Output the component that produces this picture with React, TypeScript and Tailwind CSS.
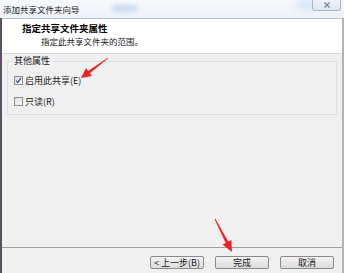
import React from "react";

const FONT = { fontFamily: '"Noto Sans CJK SC", "Noto Sans", sans-serif' };

type Pt = [number, number];

// Tapered red arrow drawn from tail to tip
const arrowPoints = (tail: Pt, tip: Pt, headLen: number, headHalf: number, shaftHalf: number) => {
  const dx = tip[0] - tail[0];
  const dy = tip[1] - tail[1];
  const len = Math.hypot(dx, dy);
  const ux = dx / len;
  const uy = dy / len;
  const nx = -uy;
  const ny = ux;
  const bx = tip[0] - ux * headLen;
  const by = tip[1] - uy * headLen;
  const pts: Pt[] = [
    [tail[0] + nx * 0.4, tail[1] + ny * 0.4],
    [bx + nx * shaftHalf, by + ny * shaftHalf],
    [bx + nx * headHalf, by + ny * headHalf],
    tip,
    [bx - nx * headHalf, by - ny * headHalf],
    [bx - nx * shaftHalf, by - ny * shaftHalf],
    [tail[0] - nx * 0.4, tail[1] - ny * 0.4],
  ];
  return pts.map((p) => `${p[0].toFixed(1)},${p[1].toFixed(1)}`).join(" ");
};

const Checkbox = ({ checked }: { checked?: boolean }) => (
  <span className="flex h-[9px] w-[9px] shrink-0 items-center justify-center border border-[#8e8f8f] bg-gradient-to-br from-[#dcdcdc] to-[#fbfbfb]">
    {checked && (
      <svg width="7" height="7" viewBox="0 0 7 7">
        <path d="M1 3.6 L2.8 5.4 L6 1" fill="none" stroke="#3c5a8e" strokeWidth="1.3" />
      </svg>
    )}
  </span>
);

const WizardButton = ({ label }: { label: string }) => (
  <button
    type="button"
    className="flex h-[13px] w-[54px] items-center justify-center rounded-[2px] border border-[#8a8a8a] bg-gradient-to-b from-[#f4f4f4] to-[#dcdcdc] text-[9px] leading-none text-[#222]"
  >
    {label}
  </button>
);

export default function App() {
  return (
    <div className="relative h-[273px] w-[344px] overflow-hidden bg-[#f0f0f0]" style={FONT}>
      <div className="flex h-full flex-col">
        {/* Title bar */}
        <div className="relative flex h-[18px] shrink-0 items-center bg-gradient-to-b from-[#f7f9fc] to-[#eef2f7] pl-[3px]">
          <span className="text-[8.5px] leading-none text-[#1a1a1a]">添加共享文件夹向导</span>
          <div className="absolute left-[112px] top-[5px] h-[7px] w-[26px] rounded-full bg-[#c9dcf0] blur-[2px]" />
          <div className="absolute left-[296px] top-[0px] h-[10px] w-[20px] rounded-full bg-[#d6e6f6] blur-[3px]" />
          <div className="absolute right-[3px] top-0 flex h-[11px] w-[29px] items-center justify-center rounded-b-[3px] border border-t-0 border-[#a9b6c6] bg-gradient-to-b from-[#eef3f9] to-[#dde6f0]">
            <svg width="6" height="6" viewBox="0 0 6 6">
              <path d="M0.5 0.5 L5.5 5.5 M5.5 0.5 L0.5 5.5" stroke="#7d8794" strokeWidth="1.4" />
            </svg>
          </div>
        </div>

        <div className="flex min-h-0 flex-1 border-l-[2px] border-r-[2px] border-l-[#5b5162] border-r-[#b4b4b4]">
          <div className="flex flex-1 flex-col border-t border-[#b9c2cc]">
            {/* Header */}
            <div className="flex h-[35px] shrink-0 flex-col border-b border-[#d3d9de] bg-white pl-[20px] pt-[3px]">
              <span className="text-[9.5px] font-bold leading-[12px] text-black">指定共享文件夹属性</span>
              <span className="ml-[19px] mt-[1px] text-[8.5px] leading-[12px] text-[#1a1a1a]">指定此共享文件夹的范围。</span>
            </div>

            {/* Content */}
            <div className="flex-1 px-[5px] pt-[7px]">
              <div className="relative h-[54px] rounded-[2px] border border-[#d5dfe5] px-[6px] pt-[14px]">
                <span className="absolute -top-[7px] left-[4px] bg-[#f0f0f0] px-[2px] text-[9px] leading-[12px] text-[#1a1a1a]">
                  其他属性
                </span>
                <div className="flex flex-col gap-[12px]">
                  <label className="flex items-center gap-[2px] text-[9px] leading-[9px] text-[#1a1a1a]">
                    <Checkbox checked />
                    启用此共享(E)
                  </label>
                  <label className="flex items-center gap-[2px] text-[9px] leading-[9px] text-[#1a1a1a]">
                    <Checkbox />
                    只读(R)
                  </label>
                </div>
              </div>
            </div>

            {/* Footer */}
            <div className="flex h-[26px] shrink-0 items-start justify-end gap-[11px] border-t border-[#a0a0a0] pr-[8px] pt-[8px]">
              <WizardButton label="< 上一步(B)" />
              <WizardButton label="完成" />
              <WizardButton label="取消" />
            </div>
          </div>
        </div>
      </div>

      {/* Red annotation arrows */}
      <svg className="pointer-events-none absolute inset-0" width="344" height="273">
        <polygon points={arrowPoints([108, 58], [81, 78], 10, 5, 1.4)} fill="#ec2227" />
        <polygon points={arrowPoints([215, 219], [232, 252], 11, 5, 1.4)} fill="#ec2227" />
      </svg>
    </div>
  );
}
